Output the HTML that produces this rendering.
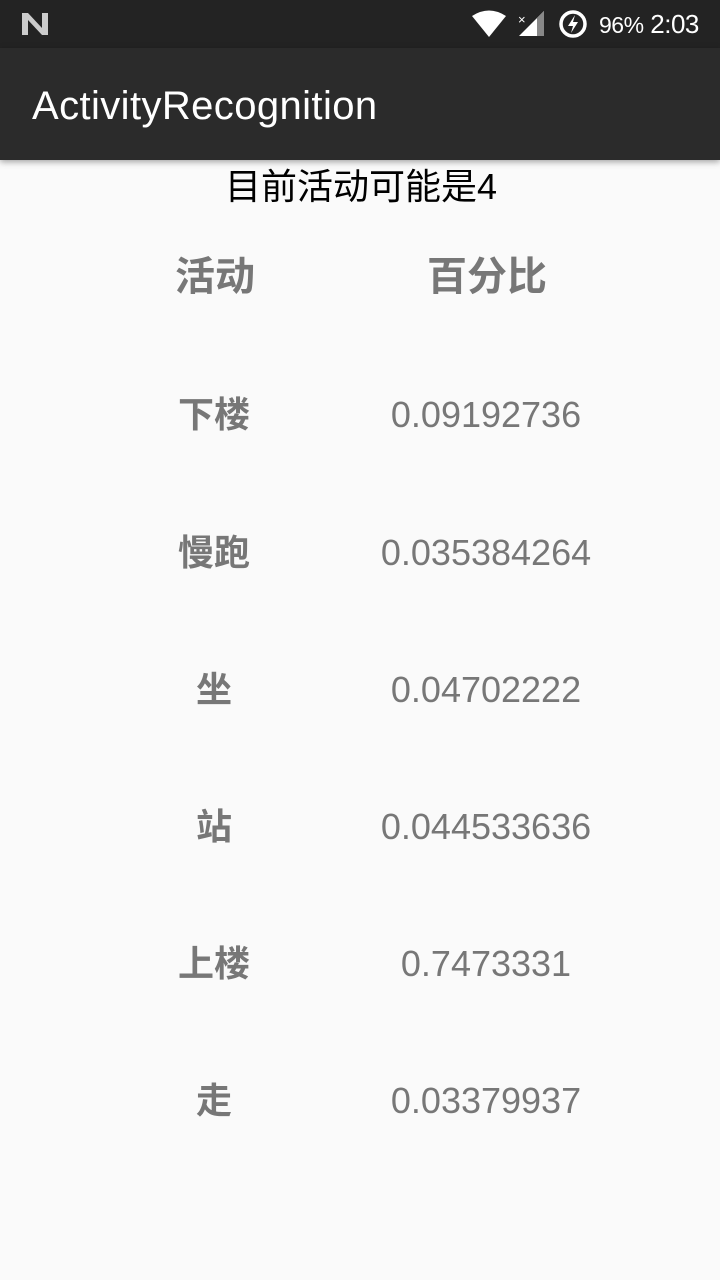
<!DOCTYPE html>
<html><head><meta charset="utf-8"><style>
body{margin:0;width:720px;height:1280px;background:#fafafa;font-family:"Liberation Sans","Noto Sans CJK SC",sans-serif;position:relative;overflow:hidden}
.sb{position:absolute;top:0;left:0;width:720px;height:48px;background:#232323;color:#fff}
.tb{position:absolute;top:48px;left:0;width:720px;height:112px;background:#2b2b2b;box-shadow:0 2px 6px rgba(0,0,0,.35)}
.t{position:absolute;left:32px;top:83px;font-size:40px;color:#fff;line-height:46px;letter-spacing:0.4px}
.c{position:absolute;transform:translateX(-50%);white-space:nowrap;line-height:40px}
.h{font-size:40px;font-weight:bold;color:#777}
.a{font-size:36px;font-weight:bold;color:#777}
.n{font-size:36px;color:#777}
</style></head><body>
<div class="sb">
<svg width="720" height="48" style="position:absolute;left:0;top:0">
<path d="M22 13 L28 13 L42 28 L42 13 L48 13 L48 35 L42 35 L28 20 L28 35 L22 35Z" fill="#ccc"/>
<path d="M472 16 Q489 5 506 16 L489 37Z" fill="#fff"/>
<path d="M519 36 L544 11 L544 36Z" fill="#fff"/><path d="M537 18 L544 11 L544 36 L537 36Z" fill="#888"/>
<text x="518" y="24" font-size="13" fill="#fff" font-family="Liberation Sans">×</text>
<circle cx="573" cy="24" r="12" fill="none" stroke="#fff" stroke-width="3.5"/>
<path d="M575 15 L568 26 L573 26 L571 33 L578 22 L573 22Z" fill="#fff"/>
</svg>
<div style="position:absolute;left:599px;top:8px;font-size:26px;line-height:32px;letter-spacing:-0.5px"><span style="font-size:23px">96%</span> 2:03</div>
</div>
<div class="tb"></div>
<div class="t">ActivityRecognition</div>
<div class="c" style="left:361px;top:167px;font-size:36px;color:#000">目前活动可能是4</div>
<div class="c h" style="left:215px;top:257px">活动</div>
<div class="c h" style="left:487px;top:257px">百分比</div>
<div class="c a" style="left:214px;top:395px">下楼</div><div class="c n" style="left:486px;top:395px">0.09192736</div>
<div class="c a" style="left:214px;top:533px">慢跑</div><div class="c n" style="left:486px;top:533px">0.035384264</div>
<div class="c a" style="left:214px;top:670px">坐</div><div class="c n" style="left:486px;top:670px">0.04702222</div>
<div class="c a" style="left:214px;top:807px">站</div><div class="c n" style="left:486px;top:807px">0.044533636</div>
<div class="c a" style="left:214px;top:944px">上楼</div><div class="c n" style="left:486px;top:944px">0.7473331</div>
<div class="c a" style="left:214px;top:1081px">走</div><div class="c n" style="left:486px;top:1081px">0.03379937</div>
</body></html>
